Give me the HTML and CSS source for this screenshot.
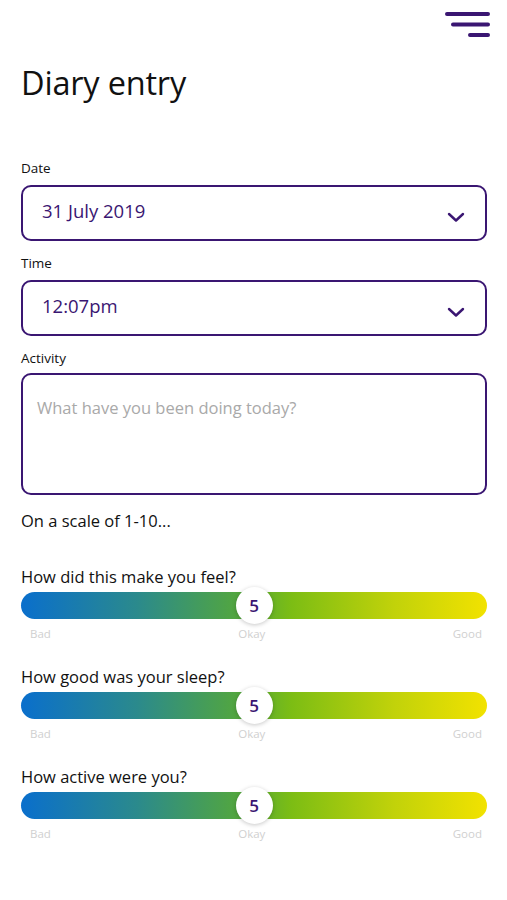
FILE: index.html
```html
<!DOCTYPE html>
<html lang="en">
<head>
  <meta charset="UTF-8">
  <title>Diary entry</title>
  <link rel="stylesheet" href="styles.css">
</head>
<body>
  <header class="topbar">
    <button class="menu" aria-label="Menu">
      <svg width="46" height="30" viewBox="0 0 46 30">
        <path d="M2 4H43M8 14.5H43M25 25H43" stroke="#3a1672" stroke-width="4" stroke-linecap="round" fill="none"/>
      </svg>
    </button>
  </header>

  <main class="page">
    <h1>Diary entry</h1>

    <div class="field first">
      <label class="field-label">Date</label>
      <div class="select">
        <span>31 July 2019</span>
        <svg class="chev" width="18" height="12" viewBox="0 0 18 12"><path d="M2 3L9 9.5L16 3" stroke="#3a1672" stroke-width="2.4" fill="none" stroke-linecap="round" stroke-linejoin="round"/></svg>
      </div>
    </div>

    <div class="field">
      <label class="field-label">Time</label>
      <div class="select">
        <span>12:07pm</span>
        <svg class="chev" width="18" height="12" viewBox="0 0 18 12"><path d="M2 3L9 9.5L16 3" stroke="#3a1672" stroke-width="2.4" fill="none" stroke-linecap="round" stroke-linejoin="round"/></svg>
      </div>
    </div>

    <div class="field">
      <label class="field-label">Activity</label>
      <div class="textarea">What have you been doing today?</div>
    </div>

    <p class="scale-intro">On a scale of 1-10...</p>

    <div class="rating">
      <p class="question">How did this make you feel?</p>
      <div class="track"><span class="thumb">5</span></div>
      <div class="ends"><span>Bad</span><span>Okay</span><span>Good</span></div>
    </div>

    <div class="rating">
      <p class="question">How good was your sleep?</p>
      <div class="track"><span class="thumb">5</span></div>
      <div class="ends"><span>Bad</span><span>Okay</span><span>Good</span></div>
    </div>

    <div class="rating">
      <p class="question">How active were you?</p>
      <div class="track"><span class="thumb">5</span></div>
      <div class="ends"><span>Bad</span><span>Okay</span><span>Good</span></div>
    </div>
  </main>
</body>
</html>
```

FILE: styles.css
```css
body {
  margin: 0;
  font-family: "Open Sans", "Noto Sans", sans-serif;
  color: #111;
  background: #fff;
}
.topbar {
  display: flex;
  justify-content: flex-end;
  padding: 10px 16px 0 0;
  height: 30px;
}
.menu {
  border: 0;
  background: none;
  padding: 0;
  width: 46px;
  height: 30px;
}
.page {
  padding: 0 20px 0 21px;
}
h1 {
  font-weight: 400;
  font-size: 32.5px;
  margin: 23px 0 0;
  line-height: 40px;
  letter-spacing: -0.2px;
}
.field {
  display: flex;
  flex-direction: column;
}
.field-label {
  font-size: 13.5px;
  line-height: 18px;
  margin: 13px 0 8px;
}
.field.first .field-label {
  margin-top: 56px;
}
.select {
  height: 56px;
  box-sizing: border-box;
  border: 2.5px solid #3a1672;
  border-radius: 10px;
  display: flex;
  align-items: center;
  justify-content: space-between;
  padding: 0 20px 5px 19px;
  color: #3a1672;
  font-size: 18.5px;
}
.chev {
  margin-top: 12px;
}
.textarea {
  height: 122px;
  margin-top: -2px;
  box-sizing: border-box;
  border: 2.5px solid #3a1672;
  border-radius: 10px;
  padding: 21px 14px;
  color: #a9a9a9;
  font-size: 16.5px;
}
.scale-intro {
  font-size: 16.5px;
  margin: 15px 0 0;
  line-height: 22px;
}
.rating {
  margin-top: 34px;
}
.rating + .rating {
  margin-top: 25px;
}
.question {
  font-size: 16.5px;
  margin: 0 0 4px;
  line-height: 22px;
}
.track {
  height: 27px;
  border-radius: 14px;
  background: linear-gradient(to right, #0a6fcc 0%, #2b8a8c 25%, #55a83a 48%, #7cbd14 58%, #c1d20a 80%, #f2e200 100%);
  display: flex;
  justify-content: center;
  align-items: center;
}
.thumb {
  width: 37px;
  height: 37px;
  border-radius: 50%;
  background: #fff;
  box-shadow: 0 1px 4px rgba(0, 0, 0, 0.22);
  display: flex;
  align-items: center;
  justify-content: center;
  color: #3a1672;
  font-size: 17px;
  font-weight: 600;
}
.ends {
  display: flex;
  justify-content: space-between;
  font-size: 11.5px;
  color: #d0d0d0;
  padding: 0 5px 0 9px;
  margin-top: 7px;
}
```
